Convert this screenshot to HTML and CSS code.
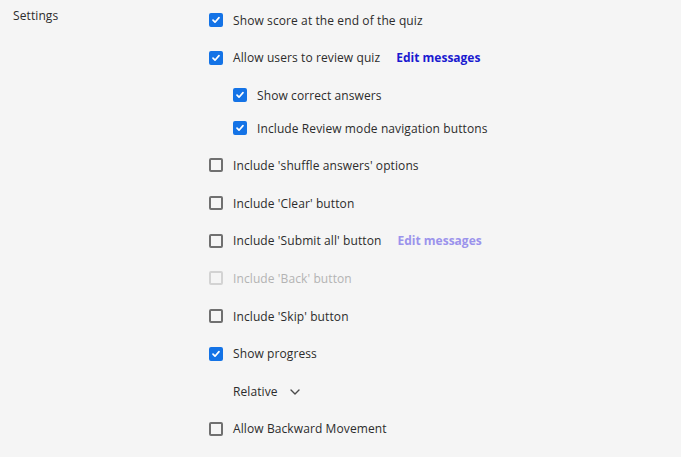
FILE: index.html
```html
<!DOCTYPE html>
<html lang="en">
<head>
    <meta charset="UTF-8">
    <title>Quiz Settings</title>
    <link rel="stylesheet" href="styles.css">
</head>
<body>
    <div class="settings">
        <div class="settings-label">Settings</div>
        <div class="settings-list">
            <label class="option">
                <input type="checkbox" checked>
                <span class="box"></span>
                <span class="text">Show score at the end of the quiz</span>
            </label>
            <div class="option">
                <label class="option-inner">
                    <input type="checkbox" checked>
                    <span class="box"></span>
                    <span class="text">Allow users to review quiz</span>
                </label>
                <a class="edit-link" href="#">Edit messages</a>
            </div>
            <div class="sub-options">
                <label class="option sub">
                    <input type="checkbox" checked>
                    <span class="box"></span>
                    <span class="text">Show correct answers</span>
                </label>
                <label class="option sub">
                    <input type="checkbox" checked>
                    <span class="box"></span>
                    <span class="text">Include Review mode navigation buttons</span>
                </label>
            </div>
            <label class="option">
                <input type="checkbox">
                <span class="box"></span>
                <span class="text">Include 'shuffle answers' options</span>
            </label>
            <label class="option">
                <input type="checkbox">
                <span class="box"></span>
                <span class="text">Include 'Clear' button</span>
            </label>
            <div class="option">
                <label class="option-inner">
                    <input type="checkbox">
                    <span class="box"></span>
                    <span class="text">Include 'Submit all' button</span>
                </label>
                <a class="edit-link disabled" href="#">Edit messages</a>
            </div>
            <label class="option disabled">
                <input type="checkbox" disabled>
                <span class="box"></span>
                <span class="text">Include 'Back' button</span>
            </label>
            <label class="option">
                <input type="checkbox">
                <span class="box"></span>
                <span class="text">Include 'Skip' button</span>
            </label>
            <label class="option">
                <input type="checkbox" checked>
                <span class="box"></span>
                <span class="text">Show progress</span>
            </label>
            <div class="dropdown">
                <span class="text">Relative</span>
                <svg class="chevron" width="10" height="6" viewBox="0 0 10 6"><path d="M1 1l4 4 4-4" fill="none" stroke="#4b4b4b" stroke-width="1.4" stroke-linecap="round" stroke-linejoin="round"/></svg>
            </div>
            <label class="option">
                <input type="checkbox">
                <span class="box"></span>
                <span class="text">Allow Backward Movement</span>
            </label>
        </div>
    </div>
</body>
</html>
```

FILE: styles.css
```css
body {
    margin: 0;
    background: #f5f5f5;
    font-family: 'Open Sans', sans-serif;
    font-size: 12px;
    letter-spacing: 0.1px;
    color: #2c2c2c;
}
.settings {
    display: flex;
    padding: 6px 0 0 13px;
}
.settings-label {
    width: 196px;
    line-height: 20px;
}
.settings-list {
    display: flex;
    flex-direction: column;
}
.option,
.option-inner {
    display: flex;
    align-items: center;
    height: 28px;
    cursor: pointer;
}
.option {
    margin-bottom: 9.7px;
}
.option input {
    display: none;
}
.box {
    box-sizing: border-box;
    width: 14px;
    height: 14px;
    border: 2px solid #707070;
    border-radius: 2px;
    margin-right: 10px;
    flex-shrink: 0;
}
.option input:checked + .box {
    border-color: #1473e6;
    background: #1473e6 url("data:image/svg+xml;utf8,<svg xmlns='http://www.w3.org/2000/svg' width='10' height='10' viewBox='0 0 10 10'><path d='M2 5.2l2 2 4-4.6' fill='none' stroke='white' stroke-width='1.7' stroke-linecap='round' stroke-linejoin='round'/></svg>") center/10px 10px no-repeat;
}
.option.disabled .box {
    border-color: #d3d3d3;
}
.option.disabled .text {
    color: #b3b3b3;
}
.sub-options {
    padding-left: 24px;
}
.sub-options .option {
    margin-bottom: 5px;
}
.sub-options .option:last-child {
    margin-bottom: 9px;
}
.edit-link {
    margin-left: 16px;
    font-weight: bold;
    letter-spacing: 0;
    color: #1a1ad0;
    text-decoration: none;
}
.edit-link.disabled {
    color: #9b93ec;
}
.dropdown {
    display: flex;
    align-items: center;
    height: 28px;
    padding-left: 24px;
    margin-bottom: 9px;
}
.chevron {
    margin-left: 12px;
}
```
